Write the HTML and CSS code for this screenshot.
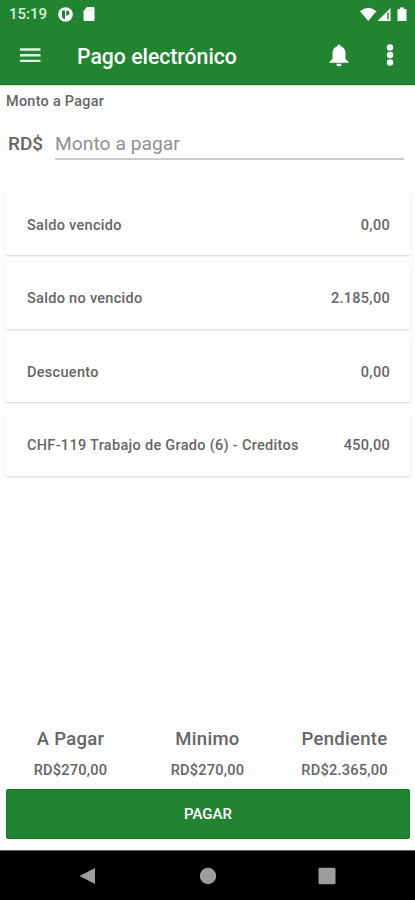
FILE: index.html
```html
<!DOCTYPE html>
<html lang="es">
<head>
    <meta charset="UTF-8">
    <meta name="viewport" content="width=device-width, initial-scale=1.0">
    <title>Pago electrónico</title>
    <link rel="stylesheet" href="styles.css">
</head>
<body>
    <header class="header">
        <div class="status-bar">
            <span class="clock">15:19</span>
            <svg class="status-app" width="15" height="15" viewBox="0 0 15 15">
                <circle cx="7.5" cy="7.5" r="7.3" fill="#fff"/>
                <path d="M4 3.6h3v8.6A5 5 0 0 1 4 10zM8.2 3.8h1a2.300 2.300 0 0 1 0 4.600h-1z" fill="#208431"/>
            </svg>
            <svg class="status-card" width="12" height="14" viewBox="0 0 12 14">
                <path d="M4 0h6.5A1 1 0 0 1 11.5 1v12a1 1 0 0 1-1 1h-9a1 1 0 0 1-1-1V4z" fill="#fff"/>
                <path d="M4 2.2v2M6.3 2.2v2M8.6 2.2v2" stroke="#c5dfca" stroke-width="1"/>
            </svg>
            <svg class="status-right" width="48" height="15" viewBox="0 0 48 15">
                <path d="M0 4.2Q8.2-2.8 16.4 4.2L8.2 14z" fill="#fff"/>
                <path d="M17.5 14L30.5 1v13z" fill="#fff"/>
                <path d="M28 5.5v7" stroke="#208431" stroke-width="1.4"/>
                <path d="M40 .5h4V2h2.5v12h-9V2H40z" fill="#fff"/>
            </svg>
        </div>
        <div class="toolbar">
            <svg class="menu-icon" width="21" height="15" viewBox="0 0 21 15">
                <path d="M0 1.5h20.5M0 7.2h20.5M0 12.9h20.5" stroke="#e2f5e2" stroke-width="2.4"/>
            </svg>
            <h1>Pago electrónico</h1>
            <svg class="bell-icon" width="20" height="23" viewBox="0 0 20 23">
                <path d="M10 .5a1.6 1.6 0 0 1 1.6 1.7C14.8 3 16.5 5.6 16.5 9v6l3 2.8v1H.5v-1l3-2.8V9c0-3.4 1.7-6 4.9-6.8A1.6 1.6 0 0 1 10 .5zM7.4 19.7h5.2a2.6 2.6 0 0 1-5.2 0z" fill="#fff"/>
            </svg>
            <svg class="more-icon" width="8" height="22" viewBox="0 0 8 22">
                <circle cx="4" cy="3.5" r="3.2" fill="#fff"/>
                <circle cx="4" cy="11" r="3.2" fill="#fff"/>
                <circle cx="4" cy="18.5" r="3.2" fill="#fff"/>
            </svg>
        </div>
    </header>

    <main class="content">
        <label class="amount-label" for="amount">Monto a Pagar</label>
        <div class="amount-row">
            <span class="currency">RD$</span>
            <input type="text" id="amount" class="amount-input" placeholder="Monto a pagar">
        </div>

        <div class="card-list">
            <div class="card"><span>Saldo vencido</span><span>0,00</span></div>
            <div class="card"><span>Saldo no vencido</span><span>2.185,00</span></div>
            <div class="card"><span>Descuento</span><span>0,00</span></div>
            <div class="card"><span>CHF-119 Trabajo de Grado (6) - Creditos</span><span>450,00</span></div>
        </div>
    </main>

    <footer class="footer">
        <div class="totals">
            <div class="total"><h2>A Pagar</h2><p>RD$270,00</p></div>
            <div class="total"><h2>Minimo</h2><p>RD$270,00</p></div>
            <div class="total"><h2>Pendiente</h2><p>RD$2.365,00</p></div>
        </div>
        <button class="pay-button">PAGAR</button>
    </footer>

    <nav class="nav-bar">
        <svg width="18" height="18" viewBox="0 0 18 18"><path d="M.5 9L16 1v16z" fill="#9c9c9c"/></svg>
        <svg width="18" height="18" viewBox="0 0 18 18"><circle cx="9" cy="9" r="8.2" fill="#9c9c9c"/></svg>
        <svg width="18" height="18" viewBox="0 0 18 18"><rect x="0.5" y="0.8" width="17" height="16.5" rx="1.5" fill="#9c9c9c"/></svg>
    </nav>
</body>
</html>
```
FILE: styles.css
```css
* {
    box-sizing: border-box;
}
body {
    margin: 0;
    height: 900px;
    display: flex;
    flex-direction: column;
    font-family: Roboto, sans-serif;
    font-weight: 500;
    background-color: #fdfdfd;
    color: #666;
    overflow: hidden;
}
h1, h2, p {
    margin: 0;
    font-weight: 500;
}
svg {
    display: block;
    flex: none;
}
.header {
    height: 85px;
    background-color: #208431;
    border-bottom: 1px solid #107010;
    box-shadow: 0 1px 0 #c8fbc8;
    color: white;
}
.status-bar {
    height: 28px;
    display: flex;
    align-items: center;
    padding: 0 8px 0 9px;
}
.clock {
    width: 49px;
    font-size: 15px;
    color: #d8f0d8;
}
.status-card {
    margin-left: 10px;
}
.status-right {
    margin-left: auto;
    margin-right: -1px;
}
.toolbar {
    height: 54px;
    display: flex;
    align-items: center;
    padding: 0 21px 0 20px;
}
h1 {
    margin-left: 36px;
    margin-top: 2px;
    font-size: 21.2px;
}
.bell-icon {
    margin-left: auto;
}
.more-icon {
    margin-left: 37px;
}
.content {
    flex: 1;
    padding: 8px 4px 0 5px;
}
.amount-label {
    display: block;
    padding-left: 1px;
    font-size: 14.4px;
    line-height: 18px;
    letter-spacing: 0.3px;
}
.amount-row {
    display: flex;
    align-items: center;
    margin-top: 15px;
    padding: 0 7px 0 3px;
}
.currency {
    width: 47px;
    font-size: 19px;
}
.amount-input {
    flex: 1;
    height: 34px;
    padding: 2px 0 0;
    border: none;
    border-bottom: 2px solid #cccccc;
    background: none;
    font-family: inherit;
    font-size: 19.2px;
    letter-spacing: 0.05px;
}
.amount-input::placeholder {
    color: #909090;
}
.card-list {
    display: flex;
    flex-direction: column;
    gap: 10.5px;
    margin-top: 32px;
}
.card {
    height: 63px;
    display: flex;
    align-items: center;
    justify-content: space-between;
    padding: 3px 21px 0 22px;
    background-color: #fefefe;
    border-radius: 3px;
    box-shadow: 0 1px 2px rgba(0,0,0,0.16);
    font-size: 14.5px;
    letter-spacing: 0.3px;
}
.footer {
    padding: 0 2px 11px;
}
.totals {
    display: flex;
    padding-bottom: 10px;
    text-align: center;
}
.total {
    flex: 1;
}
.total h2 {
    font-size: 18.5px;
    line-height: 24px;
    letter-spacing: 0.3px;
}
.total p {
    margin-top: 10px;
    font-size: 14.6px;
    line-height: 18px;
    letter-spacing: 0.2px;
}
.pay-button {
    display: block;
    width: 404px;
    height: 50px;
    margin: 0 auto 0 4px;
    border: 1px solid #107a1a;
    border-radius: 2px;
    background-color: #208431;
    color: white;
    font-family: inherit;
    font-size: 15px;
    font-weight: 500;
}
.nav-bar {
    height: 50px;
    display: flex;
    align-items: center;
    justify-content: space-between;
    padding: 0 79px;
    background-color: black;
    border-top: 1px solid #606060;
}
```
